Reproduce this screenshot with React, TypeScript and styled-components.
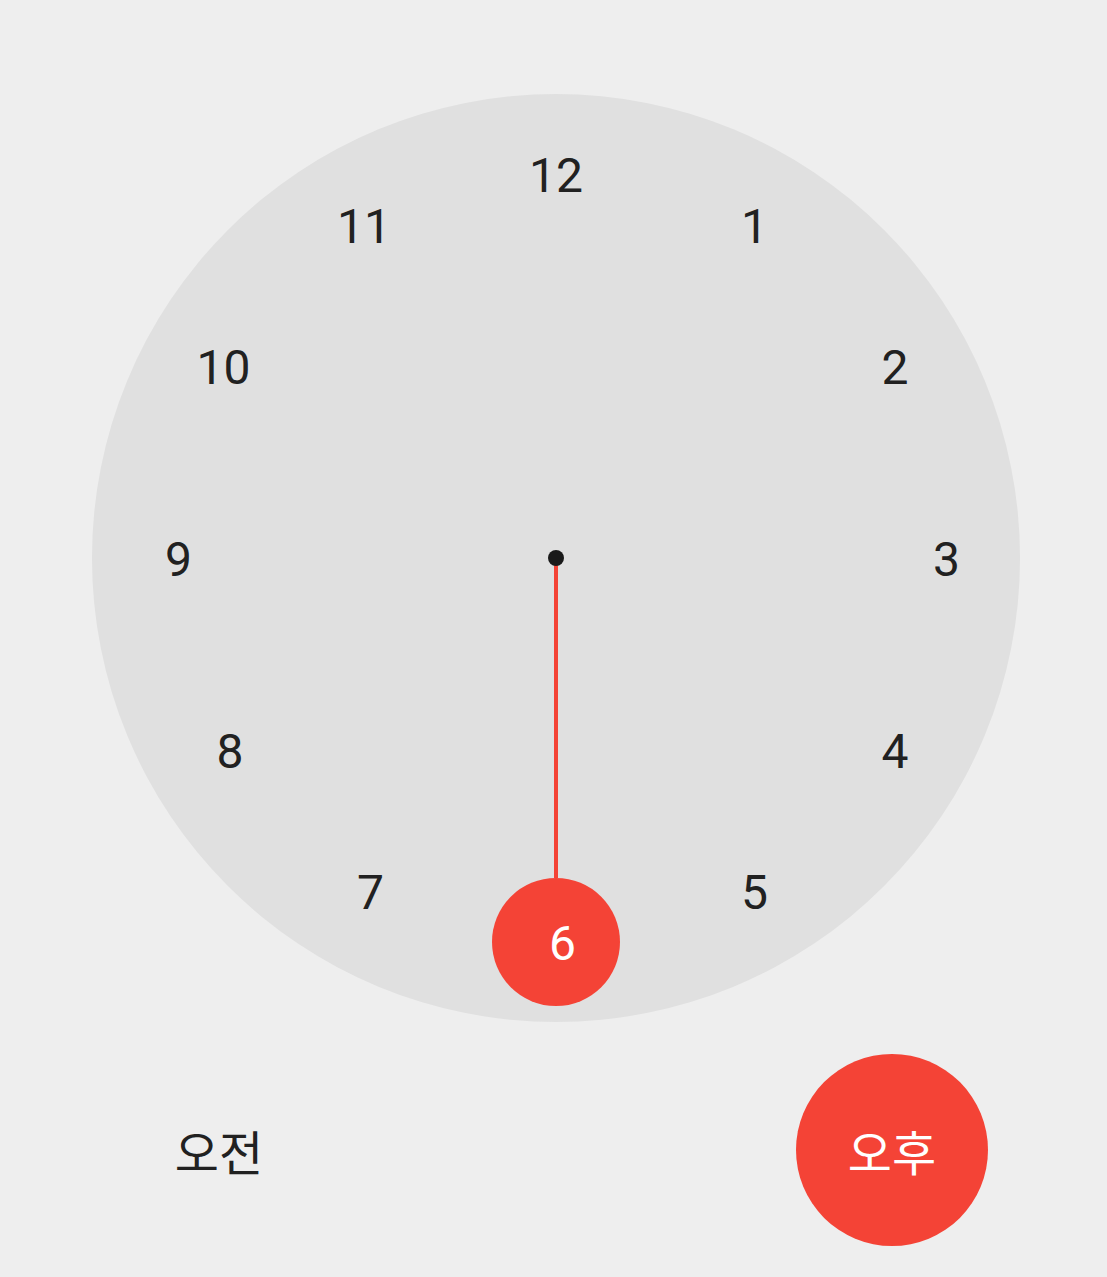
import React, { useState } from "react";
import styled, { createGlobalStyle } from "styled-components";

const RED = "#f44336";
const INK = "#212121";
const FACE = 928;
const HALF = FACE / 2;
const NUM_R = 384;

const GlobalStyle = createGlobalStyle`
  html, body {
    margin: 0;
    padding: 0;
    background: #eeeeee;
  }
  body {
    font-family: Roboto, "Noto Sans", sans-serif;
  }
`;

const Page = styled.div`
  width: 1107px;
  height: 1277px;
  background: #eeeeee;
  box-sizing: border-box;
  padding-top: 94px;
  display: flex;
  flex-direction: column;
  gap: 32px;
  overflow: hidden;
`;

const Face = styled.div`
  position: relative;
  width: ${FACE}px;
  height: ${FACE}px;
  margin-left: 92px;
  border-radius: 50%;
  background: #e0e0e0;
`;

const Number = styled.div<{ $single: boolean; $active: boolean }>`
  position: absolute;
  transform: translate(-50%, -50%);
  display: flex;
  align-items: center;
  justify-content: center;
  box-sizing: border-box;
  width: 128px;
  height: 128px;
  padding-top: 4px;
  padding-left: ${(p) => (p.$single ? "13px" : "0")};
  border-radius: 50%;
  background: ${(p) => (p.$active ? RED : "transparent")};
  color: ${(p) => (p.$active ? "#ffffff" : INK)};
  font-family: Roboto, "Noto Sans", sans-serif;
  font-size: 48px;
  line-height: 1;
  z-index: ${(p) => (p.$active ? 2 : 1)};
  cursor: pointer;
  user-select: none;
`;

const Hand = styled.div`
  position: absolute;
  left: ${HALF - 2}px;
  top: ${HALF}px;
  width: 4px;
  height: ${NUM_R - 64}px;
  background: ${RED};
  transform-origin: 2px 0;
  z-index: 1;
`;

const Pivot = styled.div`
  position: absolute;
  left: ${HALF - 8}px;
  top: ${HALF - 8}px;
  width: 16px;
  height: 16px;
  border-radius: 50%;
  background: #1a1a1a;
  z-index: 3;
`;

const PeriodRow = styled.div`
  display: flex;
  justify-content: space-between;
  padding: 0 119px 0 123px;
`;

const PeriodButton = styled.button<{ $active: boolean }>`
  width: 192px;
  height: 192px;
  border: none;
  border-radius: 50%;
  padding: 0;
  background: ${(p) => (p.$active ? RED : "transparent")};
  color: ${(p) => (p.$active ? "#ffffff" : INK)};
  font-family: "Noto Sans CJK KR", "Noto Sans", sans-serif;
  font-size: 48px;
  line-height: 1;
  cursor: pointer;
`;

const hours = [12, 1, 2, 3, 4, 5, 6, 7, 8, 9, 10, 11];

export default function App() {
  const [hour, setHour] = useState(6);
  const [pm, setPm] = useState(true);
  const handAngle = (hour % 12) * 30;

  return (
    <>
      <GlobalStyle />
      <Page>
        <Face>
          <Hand style={{ transform: `rotate(${handAngle + 180}deg)` }} />
          <Pivot />
          {hours.map((h, i) => {
            const a = (i * 30 * Math.PI) / 180;
            const x = HALF + NUM_R * Math.sin(a);
            const y = HALF - NUM_R * Math.cos(a);
            return (
              <Number
                key={h}
                $single={h < 10}
                $active={h === hour}
                style={{ left: x, top: y }}
                onClick={() => setHour(h)}
              >
                {h}
              </Number>
            );
          })}
        </Face>
        <PeriodRow>
          <PeriodButton $active={!pm} onClick={() => setPm(false)}>
            오전
          </PeriodButton>
          <PeriodButton $active={pm} onClick={() => setPm(true)}>
            오후
          </PeriodButton>
        </PeriodRow>
      </Page>
    </>
  );
}
